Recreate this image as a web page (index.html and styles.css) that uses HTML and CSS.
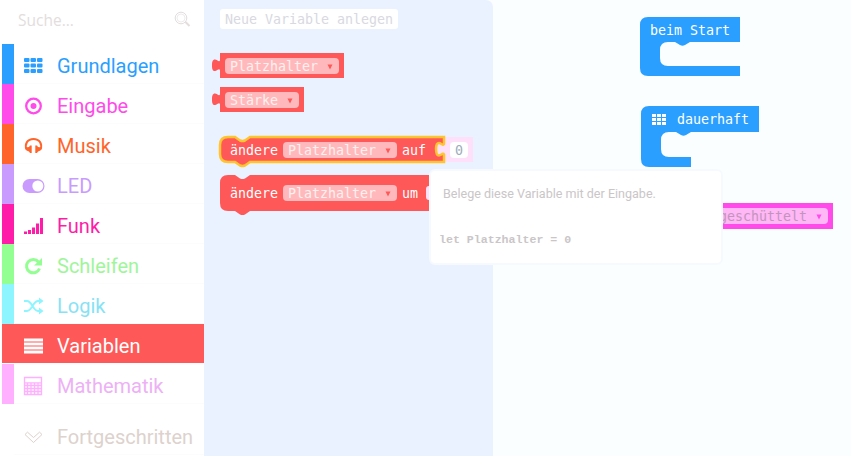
FILE: index.html
```html
<!DOCTYPE html>
<html lang="de">
<head>
<meta charset="utf-8">
<title>Editor</title>
<link rel="stylesheet" href="styles.css">
</head>
<body>
<div class="editor">
  <nav class="toolbox">
    <div class="search"><span>Suche...</span>
      <svg width="18" height="18" viewBox="0 0 18 18" fill="none" stroke="currentColor"><circle cx="7" cy="7" r="5.8"/><circle cx="7" cy="7" r="4" stroke-width=".6"/><path d="M11.500 11l4 4" stroke-width="2"/></svg>
    </div>
    <div class="row basic"><svg class="icon" viewBox="0 0 22 22"><g fill="currentColor"><rect x="1" y="3" width="5.5" height="4" rx="1"/><rect x="7.5" y="3" width="5.5" height="4" rx="1"/><rect x="14" y="3" width="5.5" height="4" rx="1"/><rect x="1" y="8.5" width="5.5" height="4" rx="1"/><rect x="7.5" y="8.5" width="5.5" height="4" rx="1"/><rect x="14" y="8.5" width="5.5" height="4" rx="1"/><rect x="1" y="14" width="5.5" height="4" rx="1"/><rect x="7.5" y="14" width="5.5" height="4" rx="1"/><rect x="14" y="14" width="5.5" height="4" rx="1"/></g></svg><span>Grundlagen</span></div>
    <div class="row input"><svg class="icon" viewBox="0 0 22 22"><circle cx="10.5" cy="11" r="7.3" fill="none" stroke="currentColor" stroke-width="2.3"/><circle cx="10.5" cy="11" r="3" fill="currentColor"/></svg><span>Eingabe</span></div>
    <div class="row music"><svg class="icon" viewBox="0 0 22 22"><path d="M3.500 14.500C1.300 9 4.500 3.900 10.500 3.900S19.700 9 17.500 14.500" fill="none" stroke="currentColor" stroke-width="2"/><path d="M2 12.500L6 12l1-1.500h1.700V18H7l-1-1.500-2.500-1zM19 12.500L15 12l-1-1.500h-1.700V18H14l1-1.500 2.500-1z" fill="currentColor"/></svg><span>Musik</span></div>
    <div class="row led"><svg class="icon" viewBox="0 0 22 22"><rect x="-.5" y="4" width="22" height="14" rx="7" fill="currentColor"/><circle cx="14.800" cy="11" r="5.500" fill="#fff"/></svg><span>LED</span></div>
    <div class="row radio"><svg class="icon" viewBox="0 0 22 22"><path d="M1 16.500h3V19H1zM5 15h3v4H5zM9 12.500h3V19H9zM13 8.500h3V19h-3zM17 3h3v16h-3z" fill="currentColor"/></svg><span>Funk</span></div>
    <div class="row loops"><svg class="icon" viewBox="0 0 22 22"><path d="M16.500 13.500A6.700 6.700 0 1 1 15.500 7" fill="none" stroke="currentColor" stroke-width="3"/><path d="M19 3v7.500h-8z" fill="currentColor"/></svg><span>Schleifen</span></div>
    <div class="row logic"><svg class="icon" viewBox="0 0 22 22"><path d="M1 6h3C9 6 10 16 15 16h3M1 16h3C9 16 10 6 15 6h3" fill="none" stroke="currentColor" stroke-width="1.900"/><path d="M16 2.500L20.500 6 16 9.500zM16 12.500l4.500 3.500-4.500 3.500z" fill="currentColor"/></svg><span>Logik</span></div>
    <div class="row variables"><svg class="icon" viewBox="0 0 22 22"><path d="M1 3.500h19v3H1zM1 7.500h19v3H1zM1 11.500h19v3H1zM1 15.500h19v3H1z" fill="currentColor"/></svg><span>Variablen</span></div>
    <div class="row math"><svg class="icon" viewBox="0 0 22 22"><path fill="none" stroke="currentColor" stroke-width="1.300" d="M1.500 2.500h17v17h-17zM1.500 7.800h17M4.500 8v11M8 8v11M11.500 8v11M15 8v11M2 10.500h16M2 13.500h16M2 16.500h16"/></svg><span>Mathematik</span></div>
    <div class="row advanced"><svg class="icon" viewBox="0 0 22 22"><path fill="#fff" stroke="currentColor" d="M2 8.500l2.500-2.300 6 5.300 6-5.300L19 8.500l-8.500 8z"/></svg><span>Fortgeschritten</span></div>
  </nav>
  <main class="workspace">
    <section class="flyout"></section>
    <svg class="canvas" width="647" height="456" viewBox="204 0 647 456">
      <rect x="220" y="9" width="178" height="20" rx="3" fill="#fff"/>
      <text class="mono new-var" x="225" y="24" textLength="168">Neue Variable anlegen</text>

      <g class="red"><path d="M220 53h124v25H220v-8c-1-2-3 1-5 1-2.500 0-3-2-3-5.500s.5-6 3-6c2 0 4 3 5 1z"/><path d="M220 87h84v25h-84v-8c-1-2-3 1-5 1-2.500 0-3-2-3-5.500s.5-6 3-6c2 0 4 3 5 1z"/></g>
      <g class="field"><rect x="225" y="58" width="114" height="16" rx="4"/><rect x="225" y="92" width="74" height="16" rx="4"/></g>
      <g class="mono value"><text x="230" y="71" textLength="88">Platzhalter</text><text x="230" y="105" textLength="48">Stärke</text></g>
      <path class="red" d="M327.500 64.500h5l-2.500 5zM287.500 98.500h5l-2.500 5z"/>

      <rect x="437" y="143" width="9" height="13" rx="3" fill="#ffe0fb"/><rect x="444" y="137" width="29" height="25" fill="#ffe0fb"/>
      <path class="red selected" d="M228 137h7l5 3.500q2.500 1 5 0l5-3.500h194v7c-1 2-3-1-5-1-2.500 0-3 2-3 6s.5 6.500 3 6.500c2 0 4-3 5-1v7.500H250l-5 3.500q-2.500 1-5 0l-5-3.500h-7q-8 0-8-8v-9q0-8 8-8z"/>
      <rect x="450" y="142" width="18" height="16" rx="4" fill="#fff"/>
      <text class="mono zero" x="455" y="155">0</text>
      <path class="red" d="M228 175h7l5 3.500q2.500 1 5 0l5-3.500h184v36H250l-5 3.500q-2.500 1-5 0l-5-3.500h-7q-8 0-8-8v-20q0-8 8-8z"/>
      <rect x="426" y="186" width="12" height="14" rx="3" fill="#ffe0fb"/>
      <g class="field"><rect x="283" y="142" width="114" height="16" rx="4"/><rect x="283" y="185" width="114" height="16" rx="4"/></g>
      <g class="mono value"><text x="288" y="155" textLength="88">Platzhalter</text><text x="288" y="198" textLength="88">Platzhalter</text></g>
      <path class="red" d="M385.500 148.500h5l-2.500 5zM385.500 191.500h5l-2.500 5z"/>
      <g class="mono label"><text x="230" y="155" textLength="48">ändere</text><text x="402" y="155" textLength="24">auf</text><text x="230" y="198" textLength="48">ändere</text><text x="402" y="198" textLength="16">um</text></g>

      <path class="blue" d="M648 17h92v25h-50l-5 3q-2.500 1.500-5 0l-5-3h-7q-8 0-8 8v8q0 8 8 8h72v10h-92q-8 0-8-8V25q0-8 8-8z"/>
      <path class="blue" d="M649 106h110v26h-68l-5 3q-2.500 1.500-5 0l-5-3h-7q-8 0-8 8v9q0 8 8 8h22v10h-42q-8 0-8-8v-45q0-8 8-8z"/>
      <path fill="#fff" d="M652 114h4v3h-4zM657 114h4v3h-4zM662 114h4v3h-4zM652 118h4v3h-4zM657 118h4v3h-4zM662 118h4v3h-4zM652 122h4v3h-4zM657 122h4v3h-4zM662 122h4v3h-4z"/>
      <g class="mono label"><text x="650" y="35" textLength="80">beim Start</text><text x="677" y="124" textLength="72">dauerhaft</text></g>

      <path fill="#ff4be9" d="M700 203h133v26H700z"/>
      <rect x="700" y="208" width="128" height="16" rx="4" fill="#ffb7f6"/>
      <text class="mono shaken" x="719" y="221" textLength="88">geschüttelt</text>
      <path fill="#ff4be9" d="M816.500 214.500h5l-2.500 5z"/>
    </svg>
    <aside class="tooltip">
      <p>Belege diese Variable mit der Eingabe.</p>
      <code>let Platzhalter = 0</code>
    </aside>
  </main>
</div>
</body>
</html>
```
FILE: styles.css
```css
* { box-sizing: border-box; }
body { margin: 0; overflow: hidden; background: #fff; }
.editor { display: flex; width: 851px; height: 456px; }

.toolbox { width: 204px; padding-left: 2px; background: #fff; font: 20px/40px Roboto, sans-serif; }
.search { display: flex; justify-content: space-between; align-items: center; height: 44px; padding: 0 12px 4px 16px; color: #e3dddd; font: 15.500px "Open Sans", sans-serif; }
.row { display: flex; align-items: center; height: 40px; padding-left: 9px; border-left: 12px solid currentColor; box-shadow: inset 0 -1px #fcfcfc; }
.icon { flex: none; width: 22px; height: 22px; margin: 4px 12px 0 0; overflow: visible; }
.row span { padding-top: 4px; }
.basic { color: #2a9fff; }
.input { color: #ff4be9; }
.music { color: #ff652b; }
.led { color: #c99bff; }
.radio { color: #ff1ca9; }
.loops { color: #93ff93; }
.logic { color: #8df5ff; }
.variables { height: 39px; margin-bottom: 1px; border-color: #ff5858; background: #ff5858; color: #fff; box-shadow: none; }
.math { color: #ffb0ff; }
.advanced { margin-top: 11px; border-color: transparent; color: #ddd2cd; }
.loops span { color: #a0f59b; }
.logic span { color: #87e2f5; }
.math span { color: #edb1f5; }

.workspace { position: relative; width: 647px; background: #fbfeff; }
.flyout { width: 289px; height: 456px; border-radius: 0 7px 0 0; background: #eaf2ff; }
.canvas { position: absolute; inset: 0; }
.mono { font-family: "DejaVu Sans Mono", monospace; font-size: 13.300px; }
.new-var { fill: #d8d9e1; }
.red { fill: #ff5858; }
.selected { stroke: #ffc52f; stroke-width: 2.500px; }
.field { fill: #ffb9bc; }
.value { fill: #fff0ee; }
.label { fill: #fff; }
.zero { fill: #9dacbc; }
.blue { fill: #2a9fff; }
.shaken { fill: #c294bc; }

.tooltip { position: absolute; left: 225px; top: 169px; width: 294px; height: 96px; padding: 16px 0 0 8px; border: 2px solid #f6faff; border-radius: 6px; background: #fff; color: #cac6c8; }
.tooltip p { margin: 0 0 32px 4px; font: 12.550px/14px Roboto, sans-serif; white-space: nowrap; }
.tooltip code { display: block; font: bold 11.600px/14px "Liberation Mono", monospace; white-space: pre; }
```
